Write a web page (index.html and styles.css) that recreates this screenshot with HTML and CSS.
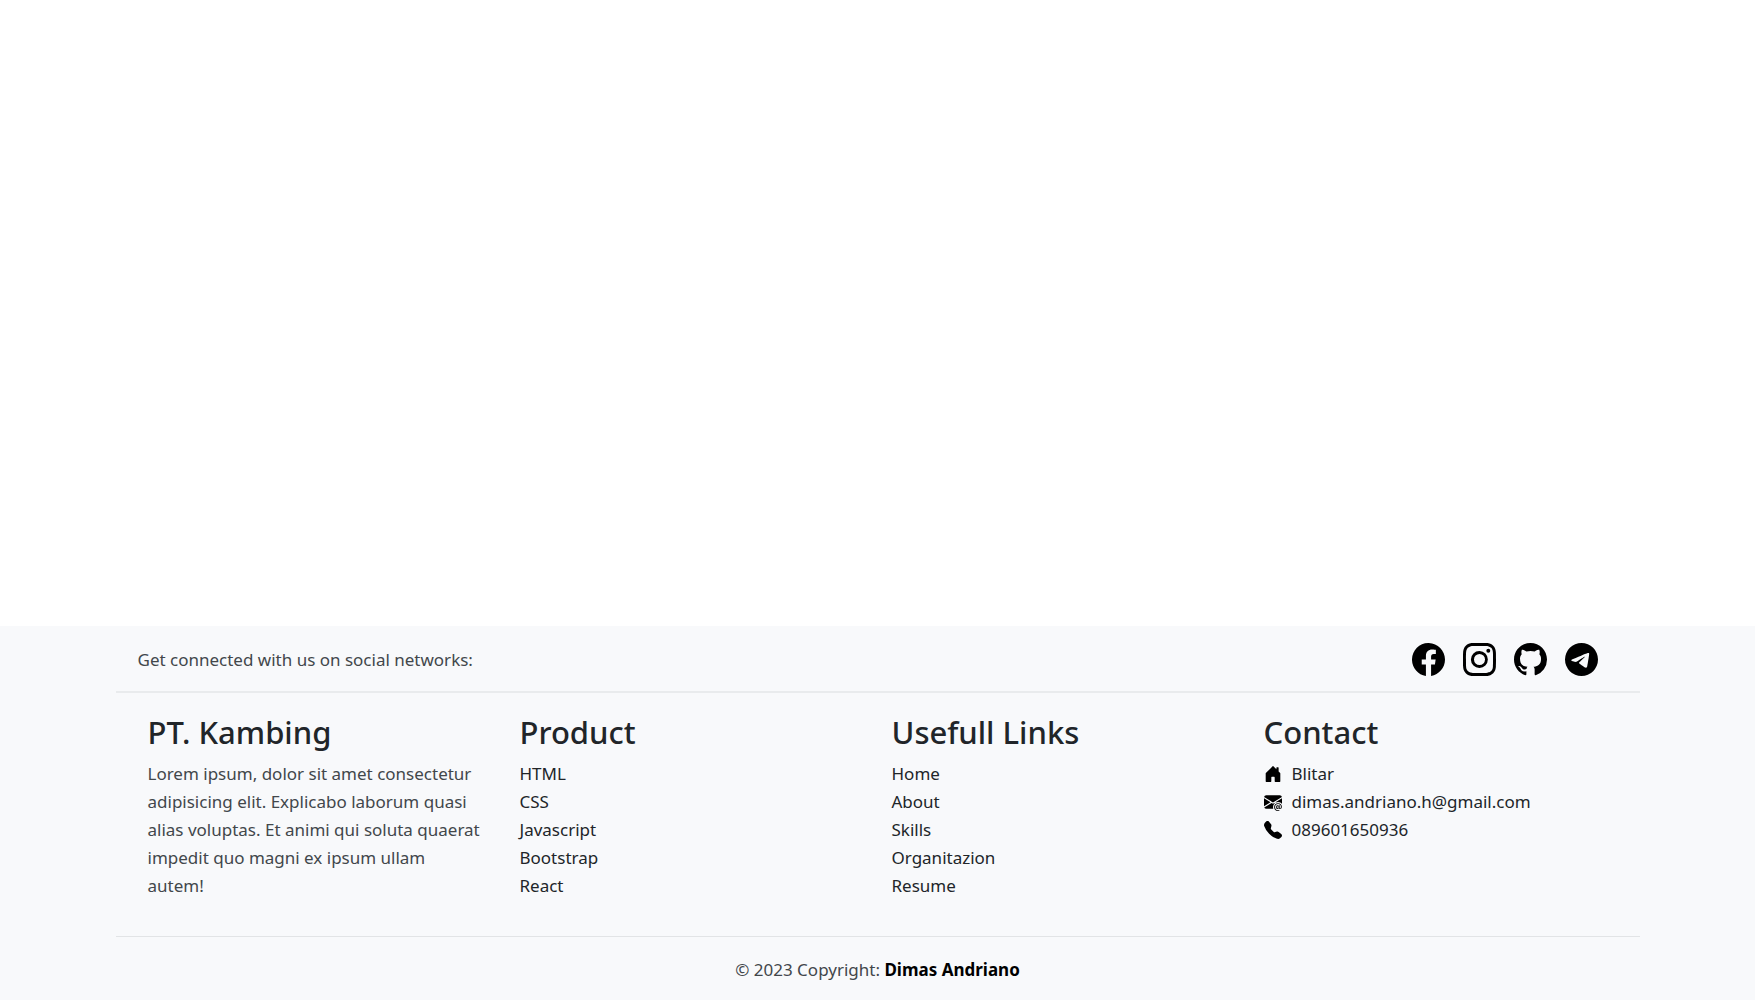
FILE: index.html
```html
<!DOCTYPE html>
<html lang="en">
<head>
<meta charset="utf-8">
<meta name="viewport" content="width=device-width, initial-scale=1">
<title>PT. Kambing</title>
<link rel="stylesheet" href="styles.css">
</head>
<body>
<main></main>
<footer class="footer">
  <div class="container">
    <section class="connect">
      <span>Get connected with us on social networks:</span>
      <nav class="social" aria-label="Social networks">
        <a href="#" aria-label="Facebook"><svg viewBox="0 0 16 16"><path d="M16 8.049c0-4.446-3.582-8.05-8-8.05C3.58 0-.002 3.603-.002 8.05c0 4.017 2.926 7.347 6.75 7.951v-5.625h-2.03V8.05H6.75V6.275c0-2.017 1.195-3.131 3.022-3.131.876 0 1.791.157 1.791.157v1.98h-1.009c-.993 0-1.303.621-1.303 1.258v1.51h2.218l-.354 2.326H9.25V16c3.824-.604 6.75-3.934 6.75-7.951z"/></svg></a>
        <a href="#" aria-label="Instagram"><svg viewBox="0 0 16 16"><path d="M8 0C5.829 0 5.556.01 4.703.048 3.85.088 3.269.222 2.76.42a3.917 3.917 0 0 0-1.417.923A3.927 3.927 0 0 0 .42 2.76C.222 3.268.087 3.85.048 4.7.01 5.555 0 5.827 0 8.001c0 2.172.01 2.444.048 3.297.04.852.174 1.433.372 1.942.205.526.478.972.923 1.417.444.445.89.719 1.416.923.51.198 1.09.333 1.942.372C5.555 15.99 5.827 16 8 16s2.444-.01 3.298-.048c.851-.04 1.434-.174 1.943-.372a3.916 3.916 0 0 0 1.416-.923c.445-.445.718-.891.923-1.417.197-.509.332-1.09.372-1.942C15.99 10.445 16 10.173 16 8s-.01-2.445-.048-3.299c-.04-.851-.175-1.433-.372-1.941a3.926 3.926 0 0 0-.923-1.417A3.911 3.911 0 0 0 13.24.42c-.51-.198-1.092-.333-1.943-.372C10.443.01 10.172 0 7.998 0h.003zm-.717 1.442h.718c2.136 0 2.389.007 3.232.046.78.035 1.204.166 1.486.275.373.145.64.319.92.599.28.28.453.546.598.92.11.281.24.705.275 1.485.039.843.047 1.096.047 3.231s-.008 2.389-.047 3.232c-.035.78-.166 1.203-.275 1.485a2.47 2.47 0 0 1-.599.919c-.28.28-.546.453-.92.598-.28.11-.704.24-1.485.276-.843.038-1.096.047-3.232.047s-2.39-.009-3.233-.047c-.78-.036-1.203-.166-1.485-.276a2.478 2.478 0 0 1-.92-.598 2.48 2.48 0 0 1-.6-.92c-.109-.281-.24-.705-.275-1.485-.038-.843-.046-1.096-.046-3.233 0-2.136.008-2.388.046-3.231.036-.78.166-1.204.276-1.486.145-.373.319-.64.599-.92.28-.28.546-.453.92-.598.282-.11.705-.24 1.485-.276.738-.034 1.024-.044 2.515-.045v.002zm4.988 1.328a.96.96 0 1 0 0 1.92.96.96 0 0 0 0-1.92zm-4.27 1.122a4.109 4.109 0 1 0 0 8.217 4.109 4.109 0 0 0 0-8.217zm0 1.441a2.667 2.667 0 1 1 0 5.334 2.667 2.667 0 0 1 0-5.334z"/></svg></a>
        <a href="#" aria-label="GitHub"><svg viewBox="0 0 16 16"><path d="M8 0C3.58 0 0 3.58 0 8c0 3.54 2.29 6.53 5.47 7.59.4.07.55-.17.55-.38 0-.19-.01-.82-.01-1.49-2.01.37-2.53-.49-2.69-.94-.09-.23-.48-.94-.82-1.13-.28-.15-.68-.52-.01-.53.63-.01 1.08.58 1.23.82.72 1.21 1.87.87 2.33.66.07-.52.28-.87.51-1.07-1.78-.2-3.64-.89-3.64-3.95 0-.87.31-1.59.82-2.15-.08-.2-.36-1.02.08-2.12 0 0 .67-.21 2.2.82.64-.18 1.32-.27 2-.27.68 0 1.36.09 2 .27 1.53-1.04 2.2-.82 2.2-.82.44 1.1.16 1.92.08 2.12.51.56.82 1.27.82 2.15 0 3.07-1.87 3.75-3.65 3.95.29.25.54.73.54 1.48 0 1.07-.01 1.93-.01 2.2 0 .21.15.46.55.38A8.012 8.012 0 0 0 16 8c0-4.42-3.58-8-8-8z"/></svg></a>
        <a href="#" aria-label="Telegram"><svg viewBox="0 0 16 16"><path d="M16 8A8 8 0 1 1 0 8a8 8 0 0 1 16 0zM8.287 5.906c-.778.324-2.334.994-4.666 2.01-.378.15-.577.298-.595.442-.03.243.275.339.69.47l.175.055c.408.133.958.288 1.243.294.26.006.549-.1.868-.32 2.179-1.471 3.304-2.214 3.374-2.23.05-.012.12-.026.166.016.047.041.042.12.037.141-.03.129-1.227 1.241-1.846 1.817-.193.18-.33.307-.358.336a8.154 8.154 0 0 1-.188.186c-.38.366-.664.64.015 1.088.327.216.589.393.85.571.284.194.568.387.936.629.093.06.183.125.27.187.331.236.63.448.997.414.214-.02.435-.22.547-.82.265-1.417.786-4.486.906-5.751a1.426 1.426 0 0 0-.013-.315.337.337 0 0 0-.114-.217.526.526 0 0 0-.31-.093c-.3.005-.763.166-2.984 1.09z"/></svg></a>
      </nav>
    </section>
    <section class="columns">
      <div>
        <h2>PT. Kambing</h2>
        <p>Lorem ipsum, dolor sit amet consectetur adipisicing elit. Explicabo laborum quasi alias voluptas. Et animi qui soluta quaerat impedit quo magni ex ipsum ullam autem!</p>
      </div>
      <div>
        <h2>Product</h2>
        <ul>
          <li><a href="#">HTML</a></li>
          <li><a href="#">CSS</a></li>
          <li><a href="#">Javascript</a></li>
          <li><a href="#">Bootstrap</a></li>
          <li><a href="#">React</a></li>
        </ul>
      </div>
      <div>
        <h2>Usefull Links</h2>
        <ul>
          <li><a href="#">Home</a></li>
          <li><a href="#">About</a></li>
          <li><a href="#">Skills</a></li>
          <li><a href="#">Organitazion</a></li>
          <li><a href="#">Resume</a></li>
        </ul>
      </div>
      <div>
        <h2>Contact</h2>
        <ul class="contact">
          <li><svg viewBox="0 0 16 16" aria-hidden="true"><path d="M6.5 14.5v-3.505c0-.245.25-.495.5-.495h2c.25 0 .5.25.5.5v3.5a.5.5 0 0 0 .5.5h4a.5.5 0 0 0 .5-.5v-7a.5.5 0 0 0-.146-.354L13 5.793V2.5a.5.5 0 0 0-.5-.5h-1a.5.5 0 0 0-.5.5v1.293L8.354 1.146a.5.5 0 0 0-.708 0l-6 6A.5.5 0 0 0 1.5 7.5v7a.5.5 0 0 0 .5.5h4a.5.5 0 0 0 .5-.5Z"/></svg><a href="#">Blitar</a></li>
          <li><svg viewBox="0 0 16 16" aria-hidden="true"><path d="M2 2A2 2 0 0 0 .05 3.555L8 8.414l7.95-4.859A2 2 0 0 0 14 2H2Zm-2 9.8V4.698l5.803 3.546L0 11.801Zm6.761-2.97-6.57 4.026A2 2 0 0 0 2 14h6.256A4.493 4.493 0 0 1 8 12.5a4.49 4.49 0 0 1 1.606-3.446l-.367-.225L8 9.586l-1.239-.757ZM16 9.671V4.697l-5.803 3.546.338.208A4.482 4.482 0 0 1 12.500 8c1.414 0 2.675.652 3.500 1.671Z"/><path d="M15.834 12.244c0 1.168-.577 2.025-1.587 2.025-.503 0-1.002-.228-1.120-.648h-.043c-.118.416-.543.643-1.015.643-.770 0-1.259-.542-1.259-1.434v-.529c0-.844.481-1.400 1.260-1.400.585 0 .870.333.953.630h.030v-.568h.905v2.190c0 .272.180.420.411.420.315 0 .639-.415.639-1.390v-.118c0-1.277-.950-2.326-2.484-2.326h-.040c-1.582 0-2.640 1.067-2.640 2.724v.157c0 1.867 1.237 2.654 2.570 2.654h.045c.507 0 .935-.070 1.180-.180v.731c-.219.100-.643.175-1.237.175h-.044C10.438 16 9 14.820 9 12.646v-.214C9 10.360 10.421 9 12.485 9h.035c2.120 0 3.314 1.430 3.314 3.034v.210Zm-4.040.210v.227c0 .586.227.800.581.800.310 0 .564-.170.564-.743v-.367c0-.516-.275-.708-.572-.708-.346 0-.573.245-.573.791Z"/></svg><a href="#">dimas.andriano.h@gmail.com</a></li>
          <li><svg viewBox="0 0 16 16" aria-hidden="true"><path fill-rule="evenodd" d="M1.885.511a1.745 1.745 0 0 1 2.610.163L6.290 2.980c.329.423.445.974.315 1.494l-.547 2.190a.678.678 0 0 0 .178.643l2.457 2.457a.678.678 0 0 0 .644.178l2.189-.547a1.745 1.745 0 0 1 1.494.315l2.306 1.794c.829.645.905 1.870.163 2.611l-1.034 1.034c-.740.740-1.846 1.065-2.877.702a18.634 18.634 0 0 1-7.010-4.420 18.634 18.634 0 0 1-4.420-7.009c-.362-1.030-.037-2.137.703-2.877L1.885.511z"/></svg><a href="#">089601650936</a></li>
        </ul>
      </div>
    </section>
    <p class="copyright">© 2023 Copyright: <a href="#">Dimas Andriano</a></p>
  </div>
</footer>
</body>
</html>
```
FILE: styles.css
```css
* {
  box-sizing: border-box;
}

body {
  display: flex;
  flex-direction: column;
  min-height: 100vh;
  margin: 0;
  background: #fff;
  color: #42474b;
  font-family: "Segoe UI", "Noto Sans", sans-serif;
  font-size: 17px;
  line-height: 28px;
}

main {
  flex: 1;
}

.footer {
  background: #f8f9fb;
}

.container {
  width: 87%;
  max-width: 1524px;
  margin: 0 auto;
}

svg {
  display: block;
  fill: #000;
}

a {
  color: #212529;
  text-decoration: none;
}

.connect {
  display: flex;
  align-items: center;
  justify-content: space-between;
  padding: 17px 42px 15px 22px;
  border-bottom: 2px solid #e9ebed;
}

.social {
  display: flex;
  gap: 18px;
}

.social svg {
  width: 33px;
  height: 33px;
}

.columns {
  display: grid;
  grid-template-columns: repeat(4, 1fr);
  gap: 36px;
  padding: 19px 40px 36px 32px;
}

h2 {
  margin: 0 0 8px;
  color: #212529;
  font-size: 31px;
  font-weight: 500;
  line-height: 40px;
}

p,
ul {
  margin: 0;
  padding: 0;
  list-style: none;
}

.contact li {
  display: flex;
  align-items: center;
  gap: 10px;
}

.contact svg {
  width: 18px;
  height: 18px;
}

.copyright {
  padding: 19px 0 16px;
  border-top: 1px solid #e2e4e6;
  text-align: center;
}

.copyright a {
  color: #000;
  font-weight: 700;
}
```
